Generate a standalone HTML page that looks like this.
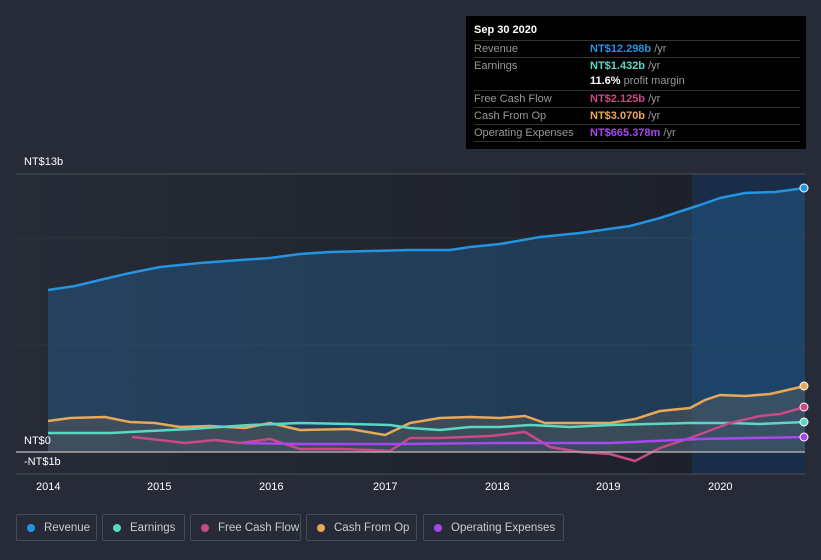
<!DOCTYPE html>
<html><head><meta charset="utf-8"><style>
body{margin:0;width:821px;height:560px;background:#262b37;font-family:"Liberation Sans",sans-serif;overflow:hidden;position:relative}
.tt{position:absolute;left:466px;top:16px;width:340px;height:133px;background:#000;color:#fff;font-size:11px}
.tt .h{font-weight:bold;padding:8px 0 0 8px;height:16px}
.row{position:absolute;left:8px;right:6px;border-top:1px solid #333;height:16px;line-height:16px;color:#999}
.row span.v{position:absolute;left:116px}
.lg{position:absolute;top:514px;height:27px;border:1px solid #444a56;border-radius:2px;color:#c8cbd0;font-size:11.5px;line-height:27px;box-sizing:border-box;padding-left:27px}
.lg i{position:absolute;left:10px;top:9px;width:8px;height:8px;border-radius:50%}
.ax{position:absolute;color:#fff;font-size:11px}
</style></head><body>
<svg width="821" height="560" style="position:absolute;left:0;top:0">
<defs><linearGradient id="bg" x1="0" x2="1" y1="0" y2="0"><stop offset="0" stop-color="#262b37"/><stop offset="1" stop-color="#1c1f27"/></linearGradient></defs>
<rect x="16" y="174" width="789" height="300" fill="url(#bg)"/>
<rect x="692" y="174" width="113" height="300" fill="#1a2d48"/>
<line x1="16" y1="174" x2="805" y2="174" stroke="#4a4f5a"/>
<line x1="16" y1="238" x2="805" y2="238" stroke="#2d323d"/>
<line x1="16" y1="345" x2="805" y2="345" stroke="#2d323d"/>
<line x1="16" y1="474" x2="805" y2="474" stroke="#4a4f5a"/>
<polyline fill="rgba(40,110,170,0.35)" stroke="none" points="48,452 48,290 75,286 100,280 130,273 160,267 200,263 240,260 270,258 300,254 330,252 370,251 410,250 450,250 470,247 500,244 540,237 580,233 630,226 660,218 700,205 720,198 745,193 775,192 805,188 805,452"/>
<polyline fill="rgba(120,110,90,0.3)" stroke="none" points="48,452 48,421 70,418 105,417 130,422 155,423 180,427 210,426 245,428 270,423 300,430 350,429 385,435 410,423 440,418 470,417 500,418 525,416 545,423 610,423 635,419 660,411 690,408 705,400 720,395 745,396 770,394 805,386 805,452"/>
<g fill="none" stroke-width="2.5" stroke-linejoin="round">
<polyline stroke="#2394e0" points="48,290 75,286 100,280 130,273 160,267 200,263 240,260 270,258 300,254 330,252 370,251 410,250 450,250 470,247 500,244 540,237 580,233 630,226 660,218 700,205 720,198 745,193 775,192 805,188"/>
<polyline stroke="#e8a857" points="48,421 70,418 105,417 130,422 155,423 180,427 210,426 245,428 270,423 300,430 350,429 385,435 410,423 440,418 470,417 500,418 525,416 545,423 610,423 635,419 660,411 690,408 705,400 720,395 745,396 770,394 805,386"/>
<polyline stroke="#5ad8c4" points="48,433 110,433 150,431 190,429 250,425 300,423 350,424 390,425 410,428 440,430 470,427 500,427 530,425 570,427 610,425 690,423 730,423 760,424 805,422"/>
<polyline stroke="#c84a85" points="132,437 160,440 185,443 215,440 240,443 270,439 300,449 340,449 370,450 390,451 410,438 440,438 490,436 525,432 550,447 580,452 610,454 635,461 660,448 690,438 730,423 760,416 780,414 805,407"/>
<polyline stroke="#a548ef" points="243,443 300,444 400,444 500,443 610,443 700,439 805,437"/>
</g>
<line x1="16" y1="452" x2="805" y2="452" stroke="#aaa" stroke-width="1.5"/>
<circle cx="804" cy="188" r="4" fill="#2394e0" stroke="#fff"/>
<circle cx="804" cy="386" r="4" fill="#e8a857" stroke="#fff"/>
<circle cx="804" cy="407" r="4" fill="#c84a85" stroke="#fff"/>
<circle cx="804" cy="422" r="4" fill="#5ad8c4" stroke="#fff"/>
<circle cx="804" cy="437" r="4" fill="#a548ef" stroke="#fff"/>
</svg>
<div class="ax" style="left:24px;top:156px">NT$13b</div>
<div class="ax" style="left:24px;top:435px">NT$0</div>
<div class="ax" style="left:24px;top:456px">-NT$1b</div>
<div class="ax" style="left:36px;top:481px">2014</div>
<div class="ax" style="left:147px;top:481px">2015</div>
<div class="ax" style="left:259px;top:481px">2016</div>
<div class="ax" style="left:373px;top:481px">2017</div>
<div class="ax" style="left:485px;top:481px">2018</div>
<div class="ax" style="left:596px;top:481px">2019</div>
<div class="ax" style="left:708px;top:481px">2020</div>
<div class="tt"><div class="h">Sep 30 2020</div>
<div class="row" style="top:24px">Revenue<span class="v"><b style="color:#2394e0">NT$12.298b</b> /yr</span></div>
<div class="row" style="top:41px">Earnings<span class="v"><b style="color:#5ad8c4">NT$1.432b</b> /yr</span></div>
<div class="row" style="top:57px;border:none">&nbsp;<span class="v"><b style="color:#fff">11.6%</b> profit margin</span></div>
<div class="row" style="top:74px">Free Cash Flow<span class="v"><b style="color:#c84a85">NT$2.125b</b> /yr</span></div>
<div class="row" style="top:91px">Cash From Op<span class="v"><b style="color:#e8a857">NT$3.070b</b> /yr</span></div>
<div class="row" style="top:108px;border-bottom:1px solid #333">Operating Expenses<span class="v"><b style="color:#a548ef">NT$665.378m</b> /yr</span></div>
</div>
<div class="lg" style="left:16px;width:81px"><i style="background:#2394e0"></i>Revenue</div>
<div class="lg" style="left:102px;width:83px"><i style="background:#5ad8c4"></i>Earnings</div>
<div class="lg" style="left:190px;width:111px"><i style="background:#c84a85"></i>Free Cash Flow</div>
<div class="lg" style="left:306px;width:111px"><i style="background:#e8a857"></i>Cash From Op</div>
<div class="lg" style="left:423px;width:141px"><i style="background:#a548ef"></i>Operating Expenses</div>
</body></html>
